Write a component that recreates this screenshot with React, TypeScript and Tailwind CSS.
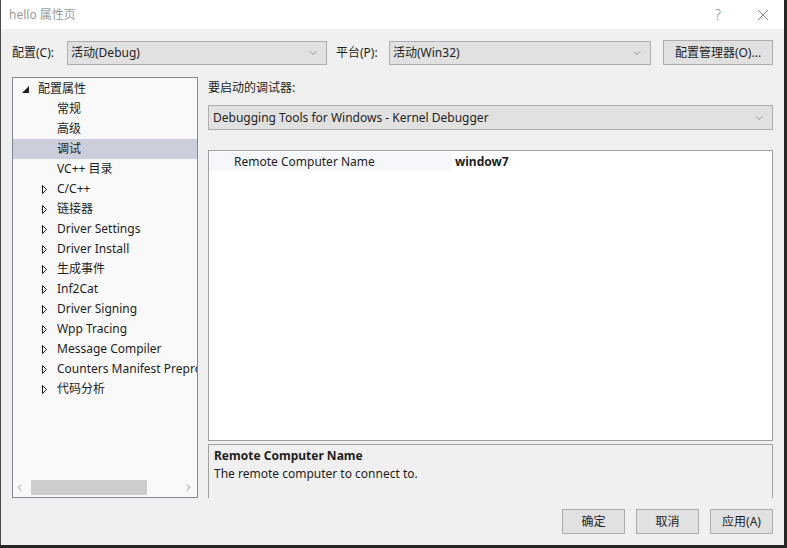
import { ChevronDown, ChevronLeft, ChevronRight } from "lucide-react";

const font = { fontFamily: '"Noto Sans", "Noto Sans CJK SC", sans-serif' };

const treeItems = [
  { label: "常规", expander: false },
  { label: "高级", expander: false },
  { label: "调试", expander: false, selected: true },
  { label: "VC++ 目录", expander: false },
  { label: "C/C++", expander: true },
  { label: "链接器", expander: true },
  { label: "Driver Settings", expander: true },
  { label: "Driver Install", expander: true },
  { label: "生成事件", expander: true },
  { label: "Inf2Cat", expander: true },
  { label: "Driver Signing", expander: true },
  { label: "Wpp Tracing", expander: true },
  { label: "Message Compiler", expander: true },
  { label: "Counters Manifest Preprocessor", expander: true },
  { label: "代码分析", expander: true },
];

const Combo = ({ text, className }: { text: string; className: string }) => (
  <div
    className={`flex items-center justify-between border border-[#adadad] bg-[#e1e1e1] pl-[3px] pr-[7px] text-[12px] text-[#1e1e1e] ${className}`}
  >
    <span className="whitespace-nowrap">{text}</span>
    <ChevronDown size={12} strokeWidth={1.2} className="text-[#606060]" />
  </div>
);

const Btn = ({ text, className }: { text: string; className: string }) => (
  <div
    className={`flex items-center justify-center border border-[#adadad] bg-[#e1e1e1] text-[12px] text-[#1e1e1e] ${className}`}
  >
    {text}
  </div>
);

const App = () => {
  return (
    <div className="flex h-[548px] w-[787px] flex-col bg-[#262626]" style={font}>
      <div className="flex h-[545px] w-[784px] flex-col border-l border-[#4a4a4a] bg-[#f0f0f0]">
        {/* title bar */}
        <div className="flex h-[29px] items-center justify-between bg-white pl-[8px] text-[12px] text-[#9a9a9a]">
          <span>hello 属性页</span>
          <div className="flex items-center">
            <span className="mr-[36px] text-[14px] font-light text-[#8a8a8a]">?</span>
            <svg width="12" height="12" viewBox="0 0 12 12" className="mr-[15px]">
              <path d="M1 1 L11 11 M11 1 L1 11" stroke="#8a8a8a" strokeWidth="1" />
            </svg>
          </div>
        </div>

        {/* config row */}
        <div className="mt-[11px] flex h-[25px] items-center pl-[11px] text-[12px] text-[#1e1e1e]">
          <span className="w-[55px]">配置(C):</span>
          <Combo text="活动(Debug)" className="h-[24px] w-[260px]" />
          <span className="ml-[9px] w-[53px]">平台(P):</span>
          <Combo text="活动(Win32)" className="h-[24px] w-[262px]" />
          <Btn text="配置管理器(O)..." className="ml-[12px] h-[25px] w-[110px]" />
        </div>

        {/* main area */}
        <div className="mt-[12px] flex pl-[11px]">
          {/* tree */}
          <div className="flex h-[421px] w-[186px] flex-col border border-[#828790] bg-[#f9f9f9]">
            <div className="flex-1 overflow-hidden pt-[1px] text-[12px] text-[#1e1e1e]">
              <div className="flex h-[20px] items-center">
                <svg width="7" height="7" viewBox="0 0 7 7" className="ml-[9px] mr-[9px] shrink-0">
                  <path d="M7 0 L7 7 L0 7 Z" fill="#1e1e1e" />
                </svg>
                <span>配置属性</span>
              </div>
              {treeItems.map((item) => (
                <div
                  key={item.label}
                  className={`flex h-[20px] items-center overflow-hidden whitespace-nowrap ${item.selected ? "bg-[#cccedb]" : ""}`}
                >
                  <div className="flex w-[44px] shrink-0 justify-end pr-[10px]">
                    {item.expander && (
                      <svg width="5" height="9" viewBox="0 0 5 9">
                        <path d="M0.5 0.5 L4.5 4.5 L0.5 8.5 Z" fill="none" stroke="#1e1e1e" strokeWidth="1" />
                      </svg>
                    )}
                  </div>
                  <span>{item.label}</span>
                </div>
              ))}
            </div>
            {/* horizontal scrollbar */}
            <div className="mb-[2px] flex h-[15px] items-center">
              <ChevronLeft size={11} strokeWidth={1.5} className="ml-[1px] text-[#606060]" />
              <div className="ml-[6px] h-[15px] w-[116px] bg-[#cdcdcd]" />
              <div className="flex-1" />
              <ChevronRight size={11} strokeWidth={1.5} className="mr-[3px] text-[#606060]" />
            </div>
          </div>

          {/* right pane */}
          <div className="ml-[10px] flex w-[565px] flex-col">
            <div className="mt-[2px] text-[12px] leading-[18px] text-[#1e1e1e]">要启动的调试器:</div>
            <Combo
              text="Debugging Tools for Windows - Kernel Debugger"
              className="mt-[8px] h-[25px] w-[565px] pl-[4px]"
            />
            <div className="mt-[20px] h-[291px] border border-[#a0a0a0] bg-white">
              <div className="flex h-[20px] pt-[1px] text-[12px] text-[#1e1e1e]">
                <div className="flex w-[242px] items-center bg-[#f5f7fb] pl-[25px]">Remote Computer Name</div>
                <div className="flex items-center pl-[4px] font-bold">window7</div>
              </div>
            </div>
            <div className="mt-[3px] h-[54px] border-x border-t border-[#a0a0a0] bg-[#f0f0f0] px-[5px] pt-[2px] text-[12px] text-[#1e1e1e]">
              <div className="font-bold leading-[18px]">Remote Computer Name</div>
              <div className="leading-[18px]">The remote computer to connect to.</div>
            </div>
          </div>
        </div>

        {/* buttons */}
        <div className="mt-[11px] flex justify-end gap-[11px] pr-[11px]">
          <Btn text="确定" className="h-[25px] w-[63px]" />
          <Btn text="取消" className="h-[25px] w-[63px]" />
          <Btn text="应用(A)" className="h-[25px] w-[63px]" />
        </div>
      </div>
    </div>
  );
};

export default App;
